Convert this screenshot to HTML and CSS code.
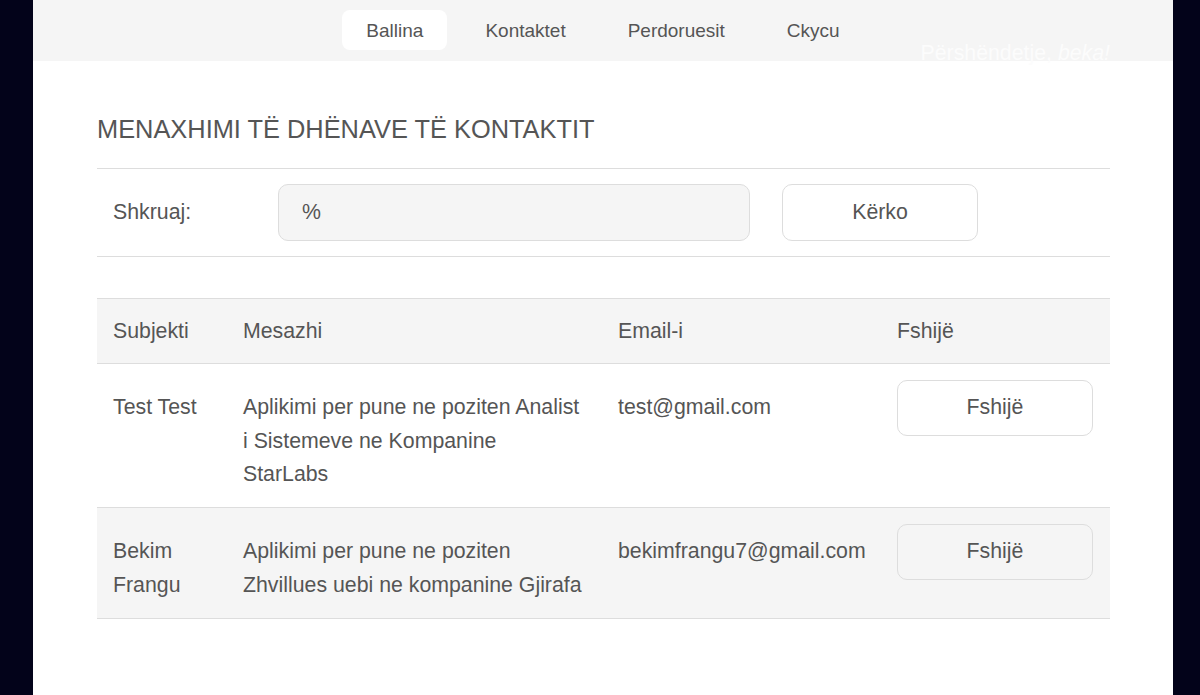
FILE: index.html
```html
<!DOCTYPE html>
<html lang="sq">
<head>
<meta charset="utf-8">
<title>Menaxhimi i kontakteve</title>
<link rel="stylesheet" href="styles.css">
</head>
<body>
<div class="page">
  <header class="topbar">
    <nav class="nav">
      <a class="nav-link active" href="#">Ballina</a>
      <a class="nav-link" href="#">Kontaktet</a>
      <a class="nav-link" href="#">Perdoruesit</a>
      <a class="nav-link" href="#">Ckycu</a>
    </nav>
    <div class="greeting">Përshëndetje, <em>beka!</em></div>
  </header>
  <main class="content">
    <h1 class="title">MENAXHIMI TË DHËNAVE TË KONTAKTIT</h1>
    <form class="search">
      <label class="search-label" for="q">Shkruaj:</label>
      <input class="search-input" id="q" type="text" value="%">
      <button class="btn search-btn" type="button">Kërko</button>
    </form>
    <table class="grid">
      <colgroup>
        <col class="c1"><col class="c2"><col class="c3"><col class="c4">
      </colgroup>
      <thead>
        <tr><th>Subjekti</th><th>Mesazhi</th><th>Email-i</th><th>Fshijë</th></tr>
      </thead>
      <tbody>
        <tr>
          <td>Test Test</td>
          <td class="msg">Aplikimi per pune ne poziten Analist i Sistemeve ne Kompanine StarLabs</td>
          <td class="mail">test@gmail.com</td>
          <td><button class="btn del-btn" type="button">Fshijë</button></td>
        </tr>
        <tr class="alt">
          <td>Bekim Frangu</td>
          <td class="msg">Aplikimi per pune ne poziten Zhvillues uebi ne kompanine Gjirafa</td>
          <td class="mail">bekimfrangu7@gmail.com</td>
          <td><button class="btn del-btn" type="button">Fshijë</button></td>
        </tr>
      </tbody>
    </table>
  </main>
</div>
</body>
</html>
```

FILE: styles.css
```css
html, body {
  margin: 0;
  padding: 0;
  background: #03031a;
  height: 100%;
}
body {
  font-family: "Liberation Sans", Arial, sans-serif;
  color: #555;
}
.page {
  margin: 0 27px 0 33px;
  min-height: 100vh;
  background: #fff;
}
.topbar {
  position: relative;
  height: 61px;
  background: #f5f5f5;
  display: flex;
  justify-content: center;
  align-items: flex-start;
}
.nav {
  display: flex;
  gap: 14px;
  margin-top: 10px;
}
.nav-link {
  display: block;
  height: 40px;
  line-height: 41px;
  padding: 0 24px;
  font-size: 19px;
  color: #555;
  text-decoration: none;
  border-radius: 8px;
}
.nav-link.active {
  background: #fff;
}
.greeting {
  position: absolute;
  right: 63px;
  top: 41px;
  font-size: 21.3px;
  line-height: 24px;
  color: #fcfcfc;
  white-space: nowrap;
}
.content {
  padding: 54px 63px 40px 64px;
}
.title {
  margin: 0 0 24px;
  font-size: 25.4px;
  line-height: 29px;
  font-weight: normal;
  color: #555;
}
.search {
  display: flex;
  align-items: center;
  border-top: 1px solid #ddd;
  border-bottom: 1px solid #ddd;
  padding: 15px 16px;
}
.search-label {
  width: 165px;
  font-size: 21.3px;
}
.search-input {
  box-sizing: border-box;
  width: 472px;
  height: 57px;
  padding: 0 23px;
  border: 1px solid #ddd;
  border-radius: 10px;
  background: #f5f5f5;
  font-family: inherit;
  font-size: 21.3px;
  color: #555;
  outline: none;
}
.btn {
  box-sizing: border-box;
  width: 196px;
  height: 56px;
  border: 1px solid #ddd;
  border-radius: 10px;
  background: transparent;
  font-family: inherit;
  font-size: 21.3px;
  color: #555;
  cursor: pointer;
}
.search-btn {
  margin-left: 32px;
  height: 57px;
  background: #fff;
}
.grid {
  width: 100%;
  margin-top: 41px;
  border-collapse: collapse;
  table-layout: fixed;
  font-size: 21.3px;
  line-height: 33.5px;
}
.c1 { width: 130px; }
.c2 { width: 375px; }
.c3 { width: 279px; }
.c4 { width: 229px; }
.grid thead tr {
  background: #f5f5f5;
  border-top: 1px solid #ddd;
}
.grid tr {
  border-bottom: 1px solid #ddd;
}
.grid th,
.grid td {
  text-align: left;
  font-weight: normal;
  padding: 16px 16px 15px;
  vertical-align: baseline;
}
.grid thead th {
  padding-bottom: 14px;
}
.grid td.msg {
  padding-right: 20px;
}
.grid td.mail {
  white-space: nowrap;
  padding-right: 0;
}
.grid tr.alt {
  background: #f5f5f5;
}
.grid tr.alt td {
  padding-bottom: 16px;
}
.del-btn {
  display: inline-block;
  vertical-align: baseline;
}
```
